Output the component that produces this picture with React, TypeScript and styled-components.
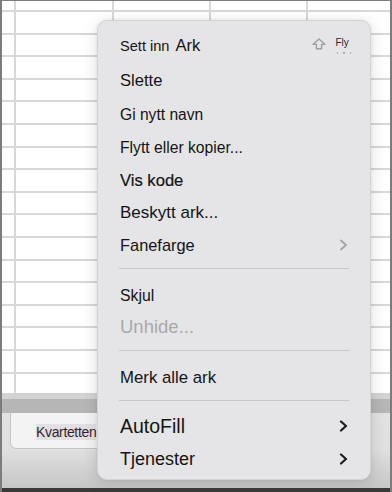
import React from "react";
import styled, { createGlobalStyle } from "styled-components";

const Global = createGlobalStyle`
  html, body { margin: 0; padding: 0; background: #ffffff; }
  body { font-family: "Liberation Sans", Arial, sans-serif; }
  * { box-sizing: border-box; }
`;

const Frame = styled.div`
  position: relative;
  width: 392px;
  height: 492px;
  display: flex;
  flex-direction: column;
  border-left: 2px solid #7c7c7c;
  border-right: 2px solid #7c7c7c;
  border-top: 1px solid #7c7c7c;
  overflow: hidden;
  background: #ffffff;
`;

const Sheet = styled.div`
  height: 392px;
  display: grid;
  grid-template-columns: 12px 96px 95px 95px 1fr;
  grid-template-rows: 9px repeat(16, 20.6px) 1fr;
  gap: 2px;
  background: #d8d8d8;
`;

const Cell = styled.div`
  background: #ffffff;
`;

const BandLight = styled.div`
  height: 6px;
  background: #d3d3d3;
`;

const BandDark = styled.div`
  height: 14px;
  background: #b6b6b6;
`;

const TabBar = styled.div`
  height: 75px;
  display: flex;
  align-items: flex-start;
  padding-left: 8px;
  background: linear-gradient(to bottom, #e2e2e2 0%, #e0e0e0 48%, #c6c6c6 100%);
`;

const Tab = styled.div`
  width: 120px;
  height: 36px;
  display: flex;
  align-items: center;
  padding-left: 25px;
  padding-top: 2px;
  background: #f3f3f3;
  border: 1px solid #c6c6c6;
  border-top: none;
  border-bottom-left-radius: 6px;
`;

const TabLabel = styled.span`
  font-size: 14px;
  letter-spacing: -0.35px;
  line-height: 16px;
  color: #3c1b32;
  background: #e1e1e1;
`;

const BottomLine = styled.div`
  height: 4px;
  background: #3a3a3a;
`;

const Menu = styled.div`
  position: absolute;
  left: 95px;
  top: 19px;
  width: 274px;
  height: 460px;
  display: flex;
  flex-direction: column;
  padding-top: 8px;
  background: #e5e5e7;
  border: 1px solid #d4d4d6;
  border-radius: 10px;
  box-shadow: 0 3px 16px rgba(0, 0, 0, 0.14), 0 0 3px rgba(0, 0, 0, 0.07);
`;

const Item = styled.div<{ $h: number }>`
  height: ${(p) => p.$h}px;
  flex: none;
  display: flex;
  align-items: center;
  justify-content: space-between;
  padding-left: 22px;
  padding-right: 22px;
`;

const Label = styled.span<{ $size?: number; $muted?: boolean; $strong?: boolean }>`
  font-size: ${(p) => p.$size ?? 16}px;
  color: ${(p) => (p.$muted ? "#a9a9ab" : "#141414")};
  white-space: nowrap;
  ${(p) => (p.$strong ? "-webkit-text-stroke: 0.2px #141414;" : "")}
`;

const Gap = styled.span`
  display: inline-block;
  width: 6px;
`;

const Sep = styled.div<{ $after: number }>`
  height: 1px;
  flex: none;
  margin: 7px 20px ${(p) => p.$after}px 21px;
  background: #c9c9cb;
`;

const Shortcut = styled.div`
  display: flex;
  align-items: flex-start;
  gap: 10px;
  margin-right: -3px;
`;

const ShortcutText = styled.div`
  display: flex;
  flex-direction: column;
  align-items: flex-start;
  gap: 4px;
  font-size: 10px;
  line-height: 10px;
  color: #2a2a2a;
`;

const Dots = styled.div`
  display: flex;
  gap: 5px;
  padding-left: 1px;
`;

const Dot = styled.span`
  width: 1.5px;
  height: 1.5px;
  border-radius: 50%;
  background: #a0a0a0;
`;

const ShiftIcon = () => (
  <svg width="14" height="12" viewBox="0 0 14 12">
    <path
      d="M7 0.9 L13 6.4 H9.6 V10.8 H4.4 V6.4 H1 Z"
      fill="none"
      stroke="#9e9e9e"
      strokeWidth="1.4"
      strokeLinejoin="round"
    />
  </svg>
);

const Chevron = ({ color, w }: { color: string; w: number }) => (
  <svg width="9" height="12" viewBox="0 0 9 12">
    <path
      d="M2 1.5 L7 6 L2 10.5"
      fill="none"
      stroke={color}
      strokeWidth={w}
      strokeLinecap="round"
      strokeLinejoin="round"
    />
  </svg>
);

export default function App() {
  const cells = Array.from({ length: 18 * 5 }, (_, i) => <Cell key={i} />);
  return (
    <>
      <Global />
      <Frame>
        <Sheet>{cells}</Sheet>
        <BandLight />
        <BandDark />
        <TabBar>
          <Tab>
            <TabLabel>Kvartetten</TabLabel>
          </Tab>
        </TabBar>
        <BottomLine />

        <Menu>
          <Item $h={34}>
            <span>
              <Label $size={14.6}>Sett inn</Label>
              <Gap />
              <Label $size={16.6}>Ark</Label>
            </span>
            <Shortcut>
              <ShiftIcon />
              <ShortcutText>
                <span>Fly</span>
                <Dots>
                  <Dot />
                  <Dot />
                  <Dot />
                </Dots>
              </ShortcutText>
            </Shortcut>
          </Item>
          <Item $h={35}>
            <Label $size={16.6}>Slette</Label>
          </Item>
          <Item $h={33}>
            <Label $size={15.6}>Gi nytt navn</Label>
          </Item>
          <Item $h={34}>
            <Label $size={15.7}>Flytt eller kopier...</Label>
          </Item>
          <Item $h={32}>
            <Label $size={16.6} $strong>Vis kode</Label>
          </Item>
          <Item $h={32}>
            <Label $size={17}>Beskytt ark...</Label>
          </Item>
          <Item $h={32}>
            <Label $size={16.4}>Fanefarge</Label>
            <Chevron color="#a4a4a6" w={1.8} />
          </Item>
          <Sep $after={12} />
          <Item $h={30}>
            <Label $size={15.8}>Skjul</Label>
          </Item>
          <Item $h={32}>
            <Label $size={18.5} $muted>Unhide...</Label>
          </Item>
          <Sep $after={12} />
          <Item $h={30}>
            <Label $size={16.8}>Merk alle ark</Label>
          </Item>
          <Sep $after={8} />
          <Item $h={34}>
            <Label $size={19.5}>AutoFill</Label>
            <Chevron color="#1e1e1e" w={2.2} />
          </Item>
          <Item $h={32}>
            <Label $size={18}>Tjenester</Label>
            <Chevron color="#1e1e1e" w={2.2} />
          </Item>
        </Menu>
      </Frame>
    </>
  );
}
